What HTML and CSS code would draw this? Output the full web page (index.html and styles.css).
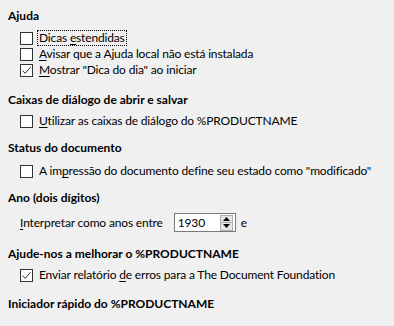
FILE: index.html
```html
<!DOCTYPE html>
<html lang="pt-br">
<head>
    <meta charset="UTF-8">
    <title>Opções - Geral</title>
    <link rel="stylesheet" href="styles.css">
</head>
<body>
    <div class="page">
        <section class="group group-help">
            <h3>Ajuda</h3>
            <label class="check"><span class="box"></span><span class="text focus">Dicas <u>e</u>stendidas</span></label>
            <label class="check"><span class="box"></span><span class="text"><u>A</u>visar que a Ajuda local não está instalada</span></label>
            <label class="check"><span class="box checked"><svg viewBox="0 0 11 11"><polyline points="1.5,5.5 4.2,8.3 9.5,2.2"/></svg></span><span class="text"><u>M</u>ostrar "Dica do dia" ao iniciar</span></label>
        </section>

        <section class="group group-dialogs">
            <h3>Caixas de diálogo de abrir e salvar</h3>
            <label class="check"><span class="box"></span><span class="text"><u>U</u>tilizar as caixas de diálogo do %PRODUCTNAME</span></label>
        </section>

        <section class="group group-status">
            <h3>Status do documento</h3>
            <label class="check"><span class="box"></span><span class="text">A im<u>p</u>ressão do documento define seu estado como "modificado"</span></label>
        </section>

        <section class="group group-year">
            <h3>Ano (dois dígitos)</h3>
            <div class="year-row">
                <span><u>I</u>nterpretar como anos entre</span>
                <div class="spin">
                    <span class="spin-value">1930</span>
                    <div class="spin-buttons">
                        <span class="spin-btn"><svg viewBox="0 0 7 4"><polygon points="0,4 7,4 3.5,0"/></svg></span>
                        <span class="spin-btn"><svg viewBox="0 0 7 4"><polygon points="0,0 7,0 3.5,4"/></svg></span>
                    </div>
                </div>
                <span>e</span>
            </div>
        </section>

        <section class="group group-improve">
            <h3>Ajude-nos a melhorar o %PRODUCTNAME</h3>
            <label class="check"><span class="box checked"><svg viewBox="0 0 11 11"><polyline points="1.5,5.5 4.2,8.3 9.5,2.2"/></svg></span><span class="text">Enviar relatório <u>d</u>e erros para a The Document Foundation</span></label>
        </section>

        <section class="group group-quick">
            <h3>Iniciador rápido do %PRODUCTNAME</h3>
        </section>
    </div>
</body>
</html>
```

FILE: styles.css
```css
body {
    margin: 0;
    background: #f0f0f0;
    color: #000000;
    font-family: Lato, "Noto Sans", sans-serif;
    font-size: 12px;
}

.page {
    display: flex;
    flex-direction: column;
    padding: 8px 8px 0 8px;
}

.group {
    display: flex;
    flex-direction: column;
}

.group h3 {
    margin: 0 0 6px 0;
    font-size: 12px;
    font-weight: bold;
    line-height: 16px;
}

/* espaços entre os grupos */
.group-help { margin-bottom: 14px; }
.group-dialogs { margin-bottom: 11px; }
.group-status { margin-bottom: 11px; }
.group-year { margin-bottom: 14px; }
.group-improve { margin-bottom: 13px; }

.group-dialogs h3 { margin-bottom: 5px; }
.group-year h3 { margin-bottom: 7px; }
.group-status h3 { margin-bottom: 7px; }
.group-improve h3 { margin-bottom: 5px; }

.check {
    display: flex;
    align-items: center;
    height: 16px;
    padding-left: 12px;
    white-space: nowrap;
}

.box {
    flex: none;
    width: 11px;
    height: 11px;
    border: 1px solid #333333;
    background: #ffffff;
    margin-right: 4px;
    display: flex;
}

.box svg {
    width: 11px;
    height: 11px;
    fill: none;
    stroke: #333333;
    stroke-width: 1;
}

.text {
    line-height: 14px;
    padding: 0 1px;
    border: 1px dotted transparent;
    letter-spacing: -0.16px;
}

.text.focus {
    border-color: #000000;
}

u {
    text-underline-offset: 2px;
}

.year-row {
    display: flex;
    align-items: center;
    height: 19px;
    padding-left: 12px;
    white-space: nowrap;
    letter-spacing: -0.16px;
}

.spin {
    display: flex;
    align-items: center;
    justify-content: space-between;
    width: 55px;
    height: 17px;
    border: 1px solid #7a7a7a;
    background: #ffffff;
    margin: 0 5px 0 11px;
    padding: 0 2px 0 3px;
}

.spin-buttons {
    display: flex;
    flex-direction: column;
    width: 13px;
    height: 16px;
    border: 1px solid #adadad;
    box-sizing: border-box;
}

.spin-btn {
    flex: 1;
    display: flex;
    align-items: center;
    justify-content: center;
    background: #e5e5e5;
}

.spin-btn + .spin-btn {
    border-top: 1px solid #adadad;
}

.spin-btn svg {
    width: 7px;
    height: 4px;
    fill: #000000;
}
```
